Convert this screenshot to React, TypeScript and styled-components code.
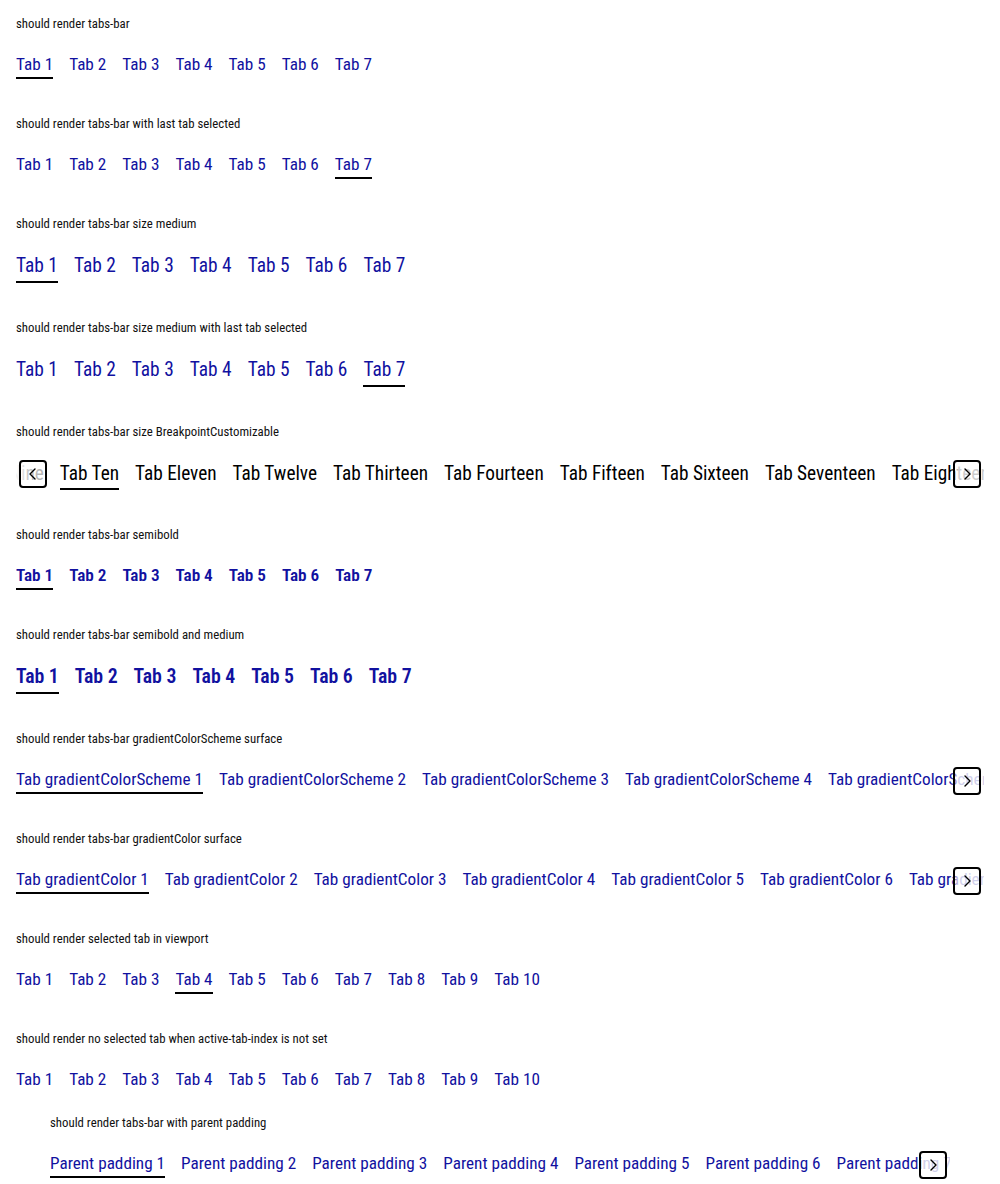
import React, { useLayoutEffect, useRef } from 'react';
import styled, { createGlobalStyle } from 'styled-components';

const GlobalStyle = createGlobalStyle`
  html, body { margin: 0; padding: 0; background: #fff; }
  body {
    font-family: Roboto, "Liberation Sans", Arial, sans-serif;
    font-stretch: condensed;
  }
`;

type Size = 'small' | 'medium' | 'breakpoint';

const sizeMap: Record<Size, { fs: number; bold: number; lh: number }> = {
  small: { fs: 17.2, bold: 17.2, lh: 24 },
  medium: { fs: 19.4, bold: 19.8, lh: 28 },
  breakpoint: { fs: 19.3, bold: 19.3, lh: 27 },
};

const BLUE = '#11119f';

const Page = styled.div`
  padding: 0 16px;
`;

const Section = styled.section<{ $pb: number }>`
  padding: 16px 0 ${(p) => p.$pb}px;
`;

const Nested = styled.div`
  padding: 0 34px;
`;

const Title = styled.p`
  margin: 0 0 20px;
  font-size: 12.8px;
  line-height: 16px;
  color: #111;
`;

const Bar = styled.div`
  position: relative;
`;

const ScrollArea = styled.div`
  position: relative;
  display: flex;
  gap: 16px;
  overflow: hidden;
`;

const Tab = styled.button<{ $size: Size; $active: boolean; $bold: boolean; $color: string }>`
  flex: 0 0 auto;
  appearance: none;
  background: none;
  border: 0;
  margin: 0;
  padding: 0 0 1px;
  border-bottom: 2px solid ${(p) => (p.$active ? '#000' : 'transparent')};
  font-family: inherit;
  font-stretch: condensed;
  font-size: ${(p) => (p.$bold ? sizeMap[p.$size].bold : sizeMap[p.$size].fs)}px;
  line-height: ${(p) => sizeMap[p.$size].lh}px;
  font-weight: ${(p) => (p.$bold ? 600 : 400)};
  color: ${(p) => p.$color};
  white-space: nowrap;
  cursor: pointer;
`;

const ControlZone = styled.div<{ $side: 'left' | 'right' }>`
  position: absolute;
  top: 0;
  ${(p) => p.$side}: 0;
  width: 34px;
  height: 28px;
  display: flex;
  justify-content: ${(p) => (p.$side === 'left' ? 'flex-start' : 'flex-end')};
  padding: 0 3px;
  box-sizing: border-box;
  background: ${(p) =>
    p.$side === 'left'
      ? 'linear-gradient(to right, rgba(255,255,255,0.95) 10%, rgba(255,255,255,0.75) 40%, rgba(255,255,255,0.7) 80%, rgba(255,255,255,0))'
      : 'linear-gradient(to left, rgba(255,255,255,0.8) 75%, rgba(255,255,255,0))'};
`;

const ScrollButton = styled.button`
  width: 28px;
  height: 28px;
  box-sizing: border-box;
  border: 2px solid #000;
  border-radius: 4px;
  background: transparent;
  padding: 0;
  display: grid;
  place-items: center;
  cursor: pointer;
`;

const Chevron = ({ dir }: { dir: 'left' | 'right' }) => (
  <svg width="16" height="16" viewBox="0 0 16 16" fill="none">
    <path
      d={dir === 'right' ? 'M6 3 L11 8 L6 13' : 'M10 3 L5 8 L10 13'}
      stroke="#000"
      strokeWidth="1.4"
      strokeLinecap="round"
      strokeLinejoin="round"
    />
  </svg>
);

type BarProps = {
  tabs: string[];
  active?: number;
  size?: Size;
  bold?: boolean;
  color?: string;
  prev?: boolean;
  next?: boolean;
  scrollOffset?: number;
};

const TabsBar = ({ tabs, active, size = 'small', bold = false, color = BLUE, prev, next, scrollOffset }: BarProps) => {
  const areaRef = useRef<HTMLDivElement>(null);
  const tabRefs = useRef<(HTMLButtonElement | null)[]>([]);
  useLayoutEffect(() => {
    if (scrollOffset !== undefined && active !== undefined && areaRef.current) {
      const el = tabRefs.current[active];
      if (el) areaRef.current.scrollLeft = el.offsetLeft - scrollOffset;
    }
  }, [active, scrollOffset]);
  return (
    <Bar>
      <ScrollArea ref={areaRef}>
        {tabs.map((t, i) => (
          <Tab
            key={t}
            ref={(el) => {
              tabRefs.current[i] = el;
            }}
            $size={size}
            $active={i === active}
            $bold={bold}
            $color={color}
          >
            {t}
          </Tab>
        ))}
      </ScrollArea>
      {prev && (
        <ControlZone $side="left">
          <ScrollButton aria-label="prev">
            <Chevron dir="left" />
          </ScrollButton>
        </ControlZone>
      )}
      {next && (
        <ControlZone $side="right">
          <ScrollButton aria-label="next">
            <Chevron dir="right" />
          </ScrollButton>
        </ControlZone>
      )}
    </Bar>
  );
};

const seven = Array.from({ length: 7 }, (_, i) => `Tab ${i + 1}`);
const ten = Array.from({ length: 10 }, (_, i) => `Tab ${i + 1}`);
const words = [
  'One', 'Two', 'Three', 'Four', 'Five', 'Six', 'Seven', 'Eight', 'Nine', 'Ten',
  'Eleven', 'Twelve', 'Thirteen', 'Fourteen', 'Fifteen', 'Sixteen', 'Seventeen', 'Eighteen', 'Nineteen', 'Twenty',
];
const wordTabs = words.map((w) => `Tab ${w}`);
const schemeTabs = Array.from({ length: 7 }, (_, i) => `Tab gradientColorScheme ${i + 1}`);
const colorTabs = Array.from({ length: 10 }, (_, i) => `Tab gradientColor ${i + 1}`);
const parentTabs = Array.from({ length: 10 }, (_, i) => `Parent padding ${i + 1}`);

export default function App() {
  return (
    <>
      <GlobalStyle />
      <Page>
        <Section $pb={21}>
          <Title>should render tabs-bar</Title>
          <TabsBar tabs={seven} active={0} />
        </Section>
        <Section $pb={21}>
          <Title>should render tabs-bar with last tab selected</Title>
          <TabsBar tabs={seven} active={6} />
        </Section>
        <Section $pb={21}>
          <Title>should render tabs-bar size medium</Title>
          <TabsBar tabs={seven} active={0} size="medium" />
        </Section>
        <Section $pb={21}>
          <Title>should render tabs-bar size medium with last tab selected</Title>
          <TabsBar tabs={seven} active={6} size="medium" />
        </Section>
        <Section $pb={21}>
          <Title>should render tabs-bar size BreakpointCustomizable</Title>
          <TabsBar tabs={wordTabs} active={9} size="breakpoint" color="#000" prev next scrollOffset={44} />
        </Section>
        <Section $pb={21}>
          <Title>should render tabs-bar semibold</Title>
          <TabsBar tabs={seven} active={0} bold />
        </Section>
        <Section $pb={21}>
          <Title>should render tabs-bar semibold and medium</Title>
          <TabsBar tabs={seven} active={0} size="medium" bold />
        </Section>
        <Section $pb={21}>
          <Title>should render tabs-bar gradientColorScheme surface</Title>
          <TabsBar tabs={schemeTabs} active={0} next />
        </Section>
        <Section $pb={21}>
          <Title>should render tabs-bar gradientColor surface</Title>
          <TabsBar tabs={colorTabs} active={0} next />
        </Section>
        <Section $pb={21}>
          <Title>should render selected tab in viewport</Title>
          <TabsBar tabs={ten} active={3} />
        </Section>
        <Section $pb={5}>
          <Title>should render no selected tab when active-tab-index is not set</Title>
          <TabsBar tabs={ten} />
        </Section>
        <Nested>
          <Section $pb={21}>
            <Title>should render tabs-bar with parent padding</Title>
            <TabsBar tabs={parentTabs} active={0} next />
          </Section>
        </Nested>
      </Page>
    </>
  );
}
